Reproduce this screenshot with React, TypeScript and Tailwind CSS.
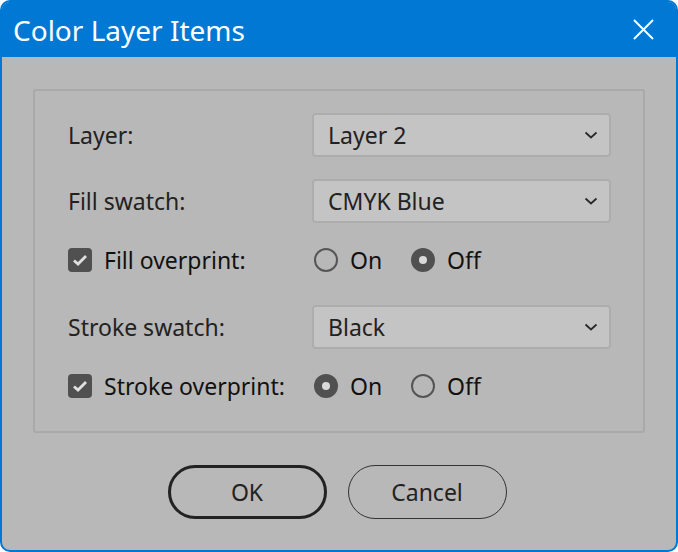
import React from 'react';

const font = { fontFamily: '"Noto Sans", "Open Sans", sans-serif' };

const Chevron: React.FC = () => (
  <svg width="14" height="8" viewBox="0 0 14 8" className="shrink-0">
    <path d="M1.5 1.5 L7 6.5 L12.5 1.5" fill="none" stroke="#2a2a2a" strokeWidth="1.8" />
  </svg>
);

const Select: React.FC<{ value: string }> = ({ value }) => (
  <div className="w-[299px] h-[44px] ml-auto flex items-center justify-between pl-[14px] pr-[11px] bg-[#c4c4c4] border-2 border-[#adadad] rounded-[4px]">
    <span className="text-[23px] text-[#222]">{value}</span>
    <Chevron />
  </div>
);

const Radio: React.FC<{ checked?: boolean; label: string }> = ({ checked, label }) => (
  <div className="flex items-center gap-3 w-[97px]">
    {checked ? (
      <div className="w-6 h-6 rounded-full bg-[#505050] flex items-center justify-center">
        <div className="w-2 h-2 rounded-full bg-[#d8d8d8]" />
      </div>
    ) : (
      <div className="w-6 h-6 rounded-full border-2 border-[#555]" />
    )}
    <span className="text-[23px] text-[#111]">{label}</span>
  </div>
);

const CheckRow: React.FC<{ label: string; on: boolean }> = ({ label, on }) => (
  <div className="h-[44px] flex items-center">
    <div className="w-6 h-6 rounded-[4px] bg-[#505050] flex items-center justify-center">
      <svg width="16" height="14" viewBox="0 0 16 14">
        <path d="M2 7.5 L6 11 L14 3" fill="none" stroke="#e0e0e0" strokeWidth="2.8" />
      </svg>
    </div>
    <span className="ml-3 text-[23px] text-[#111]">{label}</span>
    <div className="ml-auto w-[299px] flex items-center pl-[2px]">
      <Radio checked={on} label="On" />
      <Radio checked={!on} label="Off" />
    </div>
  </div>
);

const SelectRow: React.FC<{ label: string; value: string }> = ({ label, value }) => (
  <div className="h-[44px] flex items-center">
    <span className="text-[23px] text-[#222]">{label}</span>
    <Select value={value} />
  </div>
);

export default function App() {
  return (
    <div className="w-[678px] h-[552px] bg-white" style={font}>
      <div className="h-full flex flex-col rounded-[10px] border-2 border-[#0078d4] bg-[#b8b8b8] overflow-hidden">
        <div className="h-[55px] shrink-0 bg-[#0078d4] flex items-center justify-between pl-[11px] pr-[22px]">
          <span className="text-[28px] text-white">Color Layer Items</span>
          <svg width="21" height="21" viewBox="0 0 22 22">
            <path d="M1 1 L21 21 M21 1 L1 21" stroke="white" strokeWidth="2" />
          </svg>
        </div>
        <div className="flex-1 px-[31px] pt-[32px]">
          <div className="border-2 border-[#a9a9a9] rounded-[3px] pl-[33px] pr-[32px] pt-[22px] pb-[23px]">
            <SelectRow label="Layer:" value="Layer 2" />
            <div className="mt-[22px]">
              <SelectRow label="Fill swatch:" value="CMYK Blue" />
            </div>
            <div className="mt-[15px]">
              <CheckRow label="Fill overprint:" on={false} />
            </div>
            <div className="mt-[23px]">
              <SelectRow label="Stroke swatch:" value="Black" />
            </div>
            <div className="mt-[15px]">
              <CheckRow label="Stroke overprint:" on={true} />
            </div>
          </div>
          <div className="mt-[32px] flex justify-center gap-[21px] pr-[4px]">
            <button className="w-[159px] h-[54px] rounded-full border-[3px] border-[#222] text-[23px] text-[#222]">OK</button>
            <button className="w-[159px] h-[54px] rounded-full border-[1.5px] border-[#333] text-[23px] text-[#222]">Cancel</button>
          </div>
        </div>
      </div>
    </div>
  );
}
